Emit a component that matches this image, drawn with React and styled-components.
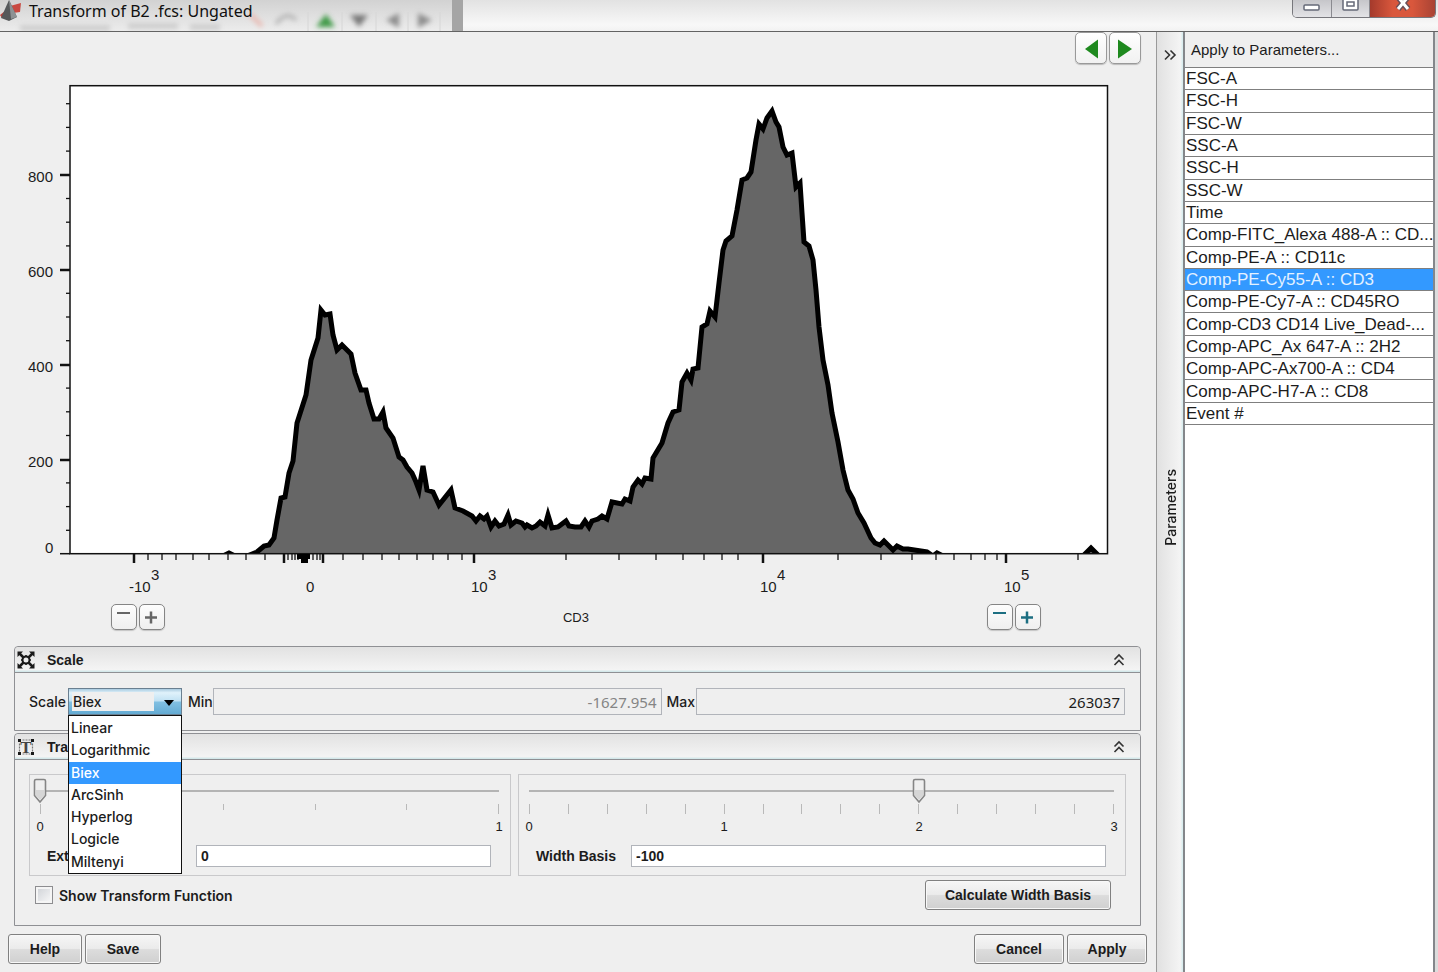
import React, { useState } from 'react'
import styled, { createGlobalStyle } from 'styled-components'

const colors = {
  window: '#efefef',
  border: '#8f9094',
  line: '#c9c9cb',
  field: '#b1b4ba',
  selected: '#3399ff',
  text: '#1c1c1c',
  green: '#1f8a1f',
  teal: '#1d6f82',
  grey: '#666666',
}

const sans = '"Liberation Sans", Arial, sans-serif'
const ui = 'Inter, "Liberation Sans", sans-serif'
const digits = '"Noto Sans", "Open Sans", sans-serif'

const GlobalStyle = createGlobalStyle`
  * {
    box-sizing: border-box;
  }
  body {
    margin: 0;
    background: ${colors.window};
    color: ${colors.text};
    font-family: ${sans};
  }
  button, input, select {
    margin: 0;
    color: inherit;
    font-family: inherit;
  }
`

const Window = styled.div`
  display: flex;
  flex-direction: column;
  min-height: 100vh;
`

const TitleBar = styled.header`
  position: relative;
  display: flex;
  align-items: flex-start;
  height: 32px;
  overflow: hidden;
  background: linear-gradient(#e2e2e2, #f8f8f8 80%, #f2f2f2);
  border-bottom: 1px solid #636363;
`

const GlassBackdrop = styled.svg`
  position: absolute;
  top: 0;
  left: 0;
`

const TitleIcon = styled.svg`
  position: relative;
  flex: none;
`

const Title = styled.h1`
  position: relative;
  flex: 1;
  margin: 0;
  padding-left: 7px;
  font-family: ${digits};
  font-size: 16px;
  font-weight: 400;
  line-height: 22px;
  color: #101010;
`

const WindowButtons = styled.div`
  display: flex;
  height: 18px;
  margin-right: 2px;
  overflow: hidden;
  border: 1px solid #77777c;
  border-top: 0;
  border-radius: 0 0 5px 5px;
`

const WindowButton = styled.button`
  display: flex;
  justify-content: center;
  width: ${(props) => (props.$close ? '66px' : '38px')};
  padding: 0;
  border: 0;
  border-left: ${(props) => (props.$first ? '0' : '1px solid #8a8a90')};
  background: ${(props) =>
    props.$close
      ? 'linear-gradient(90deg, #a43a2c, #d9573c 35%, #d9573c 65%, #a84334)'
      : 'linear-gradient(#c6c6ca, #e3e3e6)'};
`

const Body = styled.div`
  display: flex;
  flex: 1;
  border-right: 3px solid #dcdcdc;
`

const Main = styled.main`
  flex: 1;
  min-width: 0;
`

const NavRow = styled.nav`
  display: flex;
  justify-content: flex-end;
  gap: 2px;
  height: 34px;
  padding-right: 15px;
`

const NavButton = styled.button`
  width: 32px;
  height: 32px;
  padding: 0;
  border: 1px solid #999;
  border-radius: 5px;
  background: linear-gradient(#fff, #f1f1f1);
  box-shadow: 0 1px 1px #bbb;
`

const ChartSvg = styled.svg`
  display: block;
  width: 100%;
  font-family: ${sans};
  font-size: 15px;
  fill: ${colors.text};
`

const AxisControls = styled.div`
  display: flex;
  align-items: center;
  justify-content: space-between;
  padding: 2px 115px 16px 111px;
  font-size: 13px;
`

const ZoomGroup = styled.div`
  display: flex;
  gap: 2px;
`

const ZoomButton = styled.button`
  width: 26px;
  height: 26px;
  padding: 0;
  border: 1px solid #858585;
  border-radius: 5px;
  background: linear-gradient(#fdfdfd, #efefef);
  box-shadow: 0 1px 1px #c4c4c4;
  color: ${(props) => props.$tint};
  svg {
    display: block;
  }
`

const Panel = styled.section`
  margin: 0 15px 2px 14px;
  border: 1px solid ${colors.border};
  border-radius: 4px 4px 0 0;
`

const PanelHeader = styled.header`
  display: flex;
  align-items: center;
  height: 26px;
  padding: 0 15px 0 2px;
  border-bottom: 1px solid ${colors.border};
  border-radius: 4px 4px 0 0;
  background: linear-gradient(#e2e2e2, #f4f4f4 92%, #d4e8ea 96%);
`

const PanelTitle = styled.h2`
  flex: 1;
  margin: 0;
  padding-left: 12px;
  font-size: 14px;
  font-weight: 700;
`

const IconButton = styled.button`
  display: flex;
  padding: 0;
  border: 0;
  background: none;
`

const ScaleRow = styled.div`
  display: flex;
  align-items: center;
  padding: 15px 15px 15px 14px;
  font-family: ${ui};
  font-size: 14px;
  font-weight: 500;
`

const ScaleLabel = styled.label`
  flex: none;
  width: ${(props) => props.$width};
`

const ComboBox = styled.div`
  position: relative;
  flex: none;
  width: 114px;
  margin-right: 6px;
`

const Select = styled.select`
  display: block;
  width: 100%;
  height: 27px;
  padding: 0 4px;
  appearance: none;
  border: 1px solid #6a7f90;
  border-radius: 0;
  outline: 0;
  background: linear-gradient(${colors.window}, ${colors.window}) 3px 3px / 82px 19px no-repeat,
    linear-gradient(#a9cbe0, #e0f2fb 15%, #c0e1f3 48%, #82c0e2 52%, #64abd3);
  font-size: 14px;
  font-weight: 500;
`

const ComboArrow = styled.svg`
  position: absolute;
  top: 12px;
  right: 8px;
  pointer-events: none;
`

const Menu = styled.ul`
  position: absolute;
  z-index: 2;
  top: 27px;
  left: 0;
  display: grid;
  grid-auto-rows: 1fr;
  width: 100%;
  height: 159px;
  margin: 0;
  padding: 1px 0 0;
  list-style: none;
  border: 1px solid #111;
  background: #fff;
`

const MenuItem = styled.li`
  padding-left: 2px;
  line-height: 22px;
  color: ${(props) => (props.$selected ? '#fff' : colors.text)};
  background: ${(props) => (props.$selected ? colors.selected : 'transparent')};
`

const RangeInput = styled.input`
  flex: ${(props) => props.$grow};
  min-width: 0;
  height: 27px;
  padding: 0 4px;
  border: 1px solid ${colors.field};
  background: ${colors.window};
  color: ${(props) => (props.disabled ? '#858585' : colors.text)};
  font-family: ${digits};
  font-size: 15px;
  text-align: right;
`

const MaxLabel = styled(ScaleLabel)`
  padding-left: 5px;
`

const TransformBody = styled.div`
  padding: 14px 14px 15px;
`

const SliderGroups = styled.div`
  display: grid;
  grid-template-columns: 482fr 608fr;
  gap: 7px;
`

const SliderGroup = styled.div`
  padding: 3px 4px 8px 3px;
  border: 1px solid ${colors.line};
`

const thumb =
  "url(\"data:image/svg+xml,%3Csvg xmlns='http://www.w3.org/2000/svg' width='14' height='26'%3E%3Cpath d='M3 1.5h8q1.500 0 1.500 1.500v14.500l-5.500 6.500-5.500-6.500v-14.500q0-1.500 1.500-1.500z' fill='%23efefef' stroke='%23858585' stroke-width='1.600'/%3E%3Cpath d='M3 12h8v5.500l-4 4.500-4-4.500z' fill='%23d6d6d6'/%3E%3C/svg%3E\")"

const Slider = styled.input`
  display: block;
  width: 100%;
  height: 26px;
  appearance: none;
  background: linear-gradient(#b4b4b4, #b4b4b4) 7px 12px / calc(100% - 14px) 2px no-repeat;
  &::-webkit-slider-thumb {
    width: 14px;
    height: 26px;
    appearance: none;
    background: ${thumb} no-repeat;
  }
`

const Ticks = styled.div`
  display: flex;
  justify-content: space-between;
  height: 13px;
  padding: 0 7px;
`

const Tick = styled.span`
  width: 1px;
  height: ${(props) => (props.$short ? '6px' : '10px')};
  background: #b9b9b9;
`

const TickLabels = styled.div`
  display: flex;
  justify-content: space-between;
  font-size: 13px;
  line-height: 20px;
  span {
    width: 14px;
    text-align: center;
  }
`

const FieldRow = styled.div`
  display: flex;
  align-items: center;
  padding: 8px 15px 0 14px;
  font-size: 14px;
  font-weight: 700;
`

const FieldLabel = styled.label`
  flex: none;
  width: ${(props) => props.$width};
  white-space: nowrap;
`

const Field = styled.input`
  flex: 1;
  min-width: 0;
  height: 22px;
  padding: 0 4px;
  border: 1px solid ${colors.field};
  background: #fff;
  font-size: 14px;
  font-weight: 700;
`

const OptionsRow = styled.div`
  display: flex;
  align-items: center;
  justify-content: space-between;
  padding: 4px 15px 0 6px;
`

const CheckLabel = styled.label`
  display: flex;
  align-items: center;
  gap: 6px;
  font-family: ${ui};
  font-size: 14px;
  font-weight: 600;
`

const Checkbox = styled.input`
  width: 18px;
  height: 18px;
  appearance: none;
  border: 1px solid #8d8d90;
  background: linear-gradient(135deg, #cdd0d5, #fafafa);
  box-shadow: inset 0 0 0 2px #f5f5f5;
`

const Button = styled.button`
  min-width: ${(props) => props.$width};
  height: 30px;
  padding: 0 10px;
  border: 1px solid #808080;
  border-radius: 3px;
  background: linear-gradient(#f6f6f6, #ebebeb 48%, #dcdcdc 52%, #d0d0d0);
  box-shadow: inset 0 0 0 1px #f8f8f8;
  font-size: 14px;
  font-weight: 700;
`

const Footer = styled.footer`
  display: flex;
  gap: 3px;
  padding: 6px 9px 7px 8px;
`

const Spacer = styled.div`
  flex: 1;
`

const Rail = styled.div`
  display: grid;
  grid-template-rows: 1fr auto 1fr;
  flex: none;
  justify-items: center;
  width: 27px;
  padding-top: 10px;
  border-left: 1px solid #9a9a9a;
  background: linear-gradient(90deg, #e1e1e1, #f4f4f4 90%, #d4ecee);
`

const RailButton = styled(IconButton)`
  align-self: start;
  padding-top: 7px;
`

const RailLabel = styled.span`
  writing-mode: vertical-rl;
  transform: rotate(180deg);
  font-family: ${ui};
  font-size: 14px;
  font-weight: 500;
`

const Side = styled.aside`
  display: flex;
  flex: none;
  flex-direction: column;
  width: 252px;
  border-right: 2px solid #84878b;
  border-left: 2px solid #84878b;
  background: #fff;
`

const SideTitle = styled.h2`
  margin: 0;
  padding-left: 6px;
  border-bottom: 1px solid #7f7f7f;
  background: ${colors.window};
  font-size: 15px;
  font-weight: 400;
  line-height: 35px;
`

const ParameterTable = styled.table`
  width: 100%;
  height: 357px;
  table-layout: fixed;
  border-spacing: 0;
  font-size: 17px;
`

const ParameterCell = styled.td`
  padding: 1px 0 0 1px;
  overflow: hidden;
  border-bottom: 1px solid #7f7f7f;
  line-height: 20px;
  white-space: nowrap;
  color: ${(props) => (props.$selected ? '#e4f1ff' : colors.text)};
  background: ${(props) => (props.$selected ? colors.selected : '#fff')};
`

const scales = ['Linear', 'Logarithmic', 'Biex', 'ArcSinh', 'Hyperlog', 'Logicle', 'Miltenyi']

const parameters = [
  'FSC-A',
  'FSC-H',
  'FSC-W',
  'SSC-A',
  'SSC-H',
  'SSC-W',
  'Time',
  'Comp-FITC_Alexa 488-A :: CD...',
  'Comp-PE-A :: CD11c',
  'Comp-PE-Cy55-A :: CD3',
  'Comp-PE-Cy7-A :: CD45RO',
  'Comp-CD3 CD14 Live_Dead-...',
  'Comp-APC_Ax 647-A :: 2H2',
  'Comp-APC-Ax700-A :: CD4',
  'Comp-APC-H7-A :: CD8',
  'Event #',
]

const histogram = `70,556 223,556 229,553 235,556 247,556 252,554 257,552 264,546 269,545 274,538
  277,520 281,498 285,497 289,473 293,461 297,423 306,395 311,360 318,338 321,310 325,315 330,314
  333,335 337,350 342,345 351,354 355,373 361,390 366,390 369,403 374,419 379,419 383,412 386,428
  393,438 399,457 403,460 407,467 412,473 416,482 419,490 423,466 427,490 433,492 439,505 451,490
  455,508 463,511 472,516 476,521 480,516 484,519 487,516 491,527 495,521 499,526 504,524 508,515
  511,525 516,521 522,523 525,527 527,525 532,528 536,526 540,522 545,526 548,515 552,528 558,527
  566,521 569,526 575,527 581,527 585,521 589,527 592,521 598,519 602,516 607,519 612,502 622,504
  625,499 630,501 633,487 638,480 642,484 645,478 651,479 653,458 662,443 668,423 673,412 679,410
  682,382 687,373 691,380 693,369 698,368 702,327 707,324 710,311 715,317 719,283 723,250 726,241
  732,236 737,210 742,180 747,178 751,172 756,140 759,124 763,129 767,118 772,111 776,122 779,127
  783,147 787,155 792,153 794,170 796,187 800,183 802,213 804,242 809,246 813,260 816,290 819,327
  823,360 828,385 832,413 838,442 843,470 848,490 853,499 858,513 864,523 871,538 875,543 880,545
  884,541 893,550 897,546 903,549 908,549 927,552 933,556 937,553 943,556 1083,556 1091,548 1099,556
  1107,556`

const minorX = [
  148, 162, 176, 193, 209, 228, 246, 265, 288, 292, 295, 298, 313, 317, 320, 343, 363, 382, 399, 417,
  433, 448, 462, 566, 619, 656, 683, 704, 722, 738, 838, 881, 912, 936, 954, 971, 985, 997, 1078,
]
const majorX = [134, 284, 323, 474, 763, 1006]

const yLabels = [
  { text: '800', x: 28, y: 175 },
  { text: '600', x: 28, y: 270 },
  { text: '400', x: 28, y: 365 },
  { text: '200', x: 28, y: 460 },
]

const xLabels = [
  { base: '-10', power: '3', x: 129, px: 151 },
  { base: '0', x: 306 },
  { base: '10', power: '3', x: 471, px: 488 },
  { base: '10', power: '4', x: 760, px: 777 },
  { base: '10', power: '5', x: 1004, px: 1021 },
]

const minorY = []
for (let i = 0; i < 20; i += 1) {
  if (i % 4 !== 0) minorY.push(554 - i * 23.7)
}

const Histogram = () => (
  <ChartSvg viewBox="0 66 1156 536" role="img" aria-label="CD3 histogram">
    <clipPath id="plot">
      <rect x="70" y="86" width="1037" height="468" />
    </clipPath>
    <rect x="70" y="86" width="1037" height="468" fill="#fff" />
    <polygon points={`${histogram} 1107,560 70,560`} fill="#666" clipPath="url(#plot)" />
    <polyline
      points={histogram}
      fill="none"
      stroke="#000"
      strokeWidth="5"
      strokeMiterlimit="5"
      clipPath="url(#plot)"
    />
    <rect x="70" y="85.700" width="1037.500" height="468" fill="none" stroke="#111" strokeWidth="1.500" />
    <g stroke="#111" strokeWidth="1.300">
      {minorY.map((y) => (
        <line key={y} x1="66" x2="70" y1={y} y2={y} />
      ))}
      {minorX.map((x) => (
        <line key={x} x1={x} x2={x} y1="554" y2="560" />
      ))}
    </g>
    <g stroke="#111" strokeWidth="2.500">
      {yLabels.map(({ y }) => (
        <line key={y} x1="60" x2="70" y1={y} y2={y} />
      ))}
      {majorX.map((x) => (
        <line key={x} x1={x} x2={x} y1="554" y2="563" />
      ))}
    </g>
    <line x1="60" x2="70" y1="553.700" y2="553.700" stroke="#111" strokeWidth="1.500" />
    <rect x="297" y="554" width="13" height="5" fill="#000" />
    <rect x="301" y="554" width="7" height="9" fill="#000" />
    {yLabels.map(({ text, x, y }) => (
      <text key={text} x={x} y={y + 7}>
        {text}
      </text>
    ))}
    <text x="45" y="553">0</text>
    {xLabels.map(({ base, power, x, px }) => (
      <g key={x}>
        <text x={x} y="592">
          {base}
        </text>
        {power && (
          <text x={px} y="580">
            {power}
          </text>
        )}
      </g>
    ))}
  </ChartSvg>
)

const ZoomButtons = ({ tint, side }) => (
  <ZoomGroup>
    <ZoomButton $tint={tint} aria-label={`Shrink ${side}`}>
      <svg width="24" height="24" stroke="currentColor" strokeWidth="2">
        <path d="M5 8h13" />
      </svg>
    </ZoomButton>
    <ZoomButton $tint={tint} aria-label={`Expand ${side}`}>
      <svg width="24" height="24" stroke="currentColor" strokeWidth="2.500">
        <path d="M5 12.500h12M11 6.500v12" />
      </svg>
    </ZoomButton>
  </ZoomGroup>
)

const CollapseIcon = () => (
  <svg width="12" height="14" fill="none" stroke="#333" strokeWidth="1.600">
    <path d="M1.500 6.500 6 2l4.500 4.500M1.500 12 6 7.500l4.500 4.500" />
  </svg>
)

const ScaleIcon = () => (
  <svg width="18" height="18" viewBox="0 0 18 18" fill="none" stroke="#1a1a1a" strokeWidth="2">
    <circle cx="9" cy="9" r="3.500" />
    <path d="M6.500 6.500 2 2M11.500 6.500 16 2M6.500 11.500 2 16M11.500 11.500 16 16" strokeWidth="2.500" />
    <path d="M0.500 0.500h5.500l-5.500 5.500zM17.500 0.500v5.500L12 0.500zM17.500 17.500H12l5.500-5.500zM0.500 17.500V12L6 17.500z" fill="#1a1a1a" stroke="none" />
    <path d="M9 4v2M9 12v2M4 9h2M12 9h2" strokeWidth="1.500" />
  </svg>
)

const TransformIcon = () => (
  <svg width="18" height="18" viewBox="0 0 18 18">
    <path d="M1 1h3v3H1zM14 1h3v3h-3zM1 14h3v3H1zM14 14h3v3h-3z" fill="#1a1a1a" />
    <path d="M5.500 2h8M5.500 16h8M2.500 5.500v8M15.500 5.500v8" stroke="#777" strokeWidth="1.200" strokeDasharray="2 1" />
    <text x="9" y="15" textAnchor="middle" fontFamily="Liberation Serif" fontSize="17" fontWeight="700" fill="#444">
      T
    </text>
  </svg>
)

const Caption = () => (
  <TitleBar>
    <GlassBackdrop width="480" height="31">
      <defs>
        <linearGradient id="glass" x1="0" x2="0" y1="0" y2="1">
          <stop offset="0" stopColor="#d2d2d2" />
          <stop offset="1" stopColor="#ececec" />
        </linearGradient>
        <filter id="soft" x="-20%" y="-50%" width="140%" height="200%">
          <feGaussianBlur stdDeviation="2.500" />
        </filter>
      </defs>
      <rect width="456" height="31" fill="url(#glass)" />
      <g filter="url(#soft)">
        <path d="M20 28h90M128 26h50M190 27h30" stroke="#c9c9c9" strokeWidth="5" />
        <path d="M250 14l12 12" stroke="#e9b8b0" strokeWidth="4" />
        <path d="M276 24q10-14 20-4" fill="none" stroke="#aaa" strokeWidth="3" />
        <path d="M316 27l10-13 9 13z" fill="#3f9a46" />
        <path d="M350 15h18l-9 12z" fill="#777" />
        <path d="M399 13v15l-13-8zM418 13v15l14-8z" fill="#8c8c8c" />
      </g>
      <path d="M308 12v19M342 12v19M376 12v19M408 12v19M440 12v19" stroke="#d6d6d6" />
      <rect x="452" width="11" height="31" fill="#a5a5a5" />
    </GlassBackdrop>
    <TitleIcon width="22" height="22">
      <path d="M10 6l11-3-1 9-7 1z" fill="#c94a42" />
      <path d="M0 15l5-4 2 5-5 2z" fill="#b8433c" />
      <path d="M9 0l8 17-8 4-8-3z" fill="#55585a" />
      <path d="M9 0l8 17-6 2z" fill="#8e9294" />
    </TitleIcon>
    <Title>Transform of B2 .fcs: Ungated</Title>
    <WindowButtons>
      <WindowButton $first aria-label="Minimize">
        <svg width="20" height="17">
          <rect x="2" y="5" width="15" height="5" rx="1" fill="#fff" stroke="#666a78" strokeWidth="1.500" />
        </svg>
      </WindowButton>
      <WindowButton aria-label="Maximize">
        <svg width="20" height="17" fill="#fff" stroke="#666a78" strokeWidth="1.500">
          <rect x="2" y="-3" width="15" height="13" rx="1" />
          <rect x="6" y="2" width="7" height="4" />
        </svg>
      </WindowButton>
      <WindowButton $close aria-label="Close">
        <svg width="20" height="17">
          <path d="M5-3l10 12M15-3L5 9" stroke="#6a5058" strokeWidth="6" />
          <path d="M5-3l10 12M15-3L5 9" stroke="#fff" strokeWidth="3" />
        </svg>
      </WindowButton>
    </WindowButtons>
  </TitleBar>
)

const App = () => {
  const [scale, setScale] = useState('Biex')

  return (
    <Window>
      <GlobalStyle />
      <Caption />
      <Body>
        <Main>
          <NavRow>
            <NavButton aria-label="Previous parameter">
              <svg width="30" height="30" fill={colors.green}>
                <path d="M22 6.500v19L9 16z" />
              </svg>
            </NavButton>
            <NavButton aria-label="Next parameter">
              <svg width="30" height="30" fill={colors.green}>
                <path d="M8 6.500v19L22 16z" />
              </svg>
            </NavButton>
          </NavRow>
          <Histogram />
          <AxisControls>
            <ZoomButtons tint={colors.grey} side="negative" />
            <span>CD3</span>
            <ZoomButtons tint={colors.teal} side="positive" />
          </AxisControls>

          <Panel>
            <PanelHeader>
              <ScaleIcon />
              <PanelTitle>Scale</PanelTitle>
              <IconButton aria-label="Collapse scale">
                <CollapseIcon />
              </IconButton>
            </PanelHeader>
            <ScaleRow>
              <ScaleLabel htmlFor="scale" $width="39px">
                Scale
              </ScaleLabel>
              <ComboBox>
                <Select id="scale" value={scale} onChange={(e) => setScale(e.target.value)}>
                  {scales.map((name) => (
                    <option key={name}>{name}</option>
                  ))}
                </Select>
                <ComboArrow width="10" height="6">
                  <path d="M0 0h10L5 6z" />
                </ComboArrow>
                <Menu role="listbox" aria-label="Scale">
                  {scales.map((name) => (
                    <MenuItem
                      key={name}
                      role="option"
                      aria-selected={name === scale}
                      $selected={name === scale}
                      onClick={() => setScale(name)}
                    >
                      {name}
                    </MenuItem>
                  ))}
                </Menu>
              </ComboBox>
              <ScaleLabel htmlFor="min" $width="25px">
                Min
              </ScaleLabel>
              <RangeInput id="min" $grow={23} defaultValue="-1627.954" disabled />
              <MaxLabel htmlFor="max" $width="34px">
                Max
              </MaxLabel>
              <RangeInput id="max" $grow={22} defaultValue="263037" />
            </ScaleRow>
          </Panel>

          <Panel>
            <PanelHeader>
              <TransformIcon />
              <PanelTitle>Transform</PanelTitle>
              <IconButton aria-label="Collapse transform">
                <CollapseIcon />
              </IconButton>
            </PanelHeader>
            <TransformBody>
              <SliderGroups>
                <SliderGroup>
                  <Slider type="range" min="0" max="1" step="0.1" defaultValue="0" aria-label="Extra decades" />
                  <Ticks>
                    {[0, 1, 2, 3, 4, 5].map((n) => (
                      <Tick key={n} $short={n > 0 && n < 5} />
                    ))}
                  </Ticks>
                  <TickLabels>
                    <span>0</span>
                    <span>1</span>
                  </TickLabels>
                  <FieldRow>
                    <FieldLabel htmlFor="decades" $width="149px">
                      Extra Decades
                    </FieldLabel>
                    <Field id="decades" defaultValue="0" />
                  </FieldRow>
                </SliderGroup>
                <SliderGroup>
                  <Slider type="range" min="0" max="3" step="0.2" defaultValue="2" aria-label="Width basis" />
                  <Ticks>
                    {Array.from({ length: 16 }, (_, n) => (
                      <Tick key={n} />
                    ))}
                  </Ticks>
                  <TickLabels>
                    <span>0</span>
                    <span>1</span>
                    <span>2</span>
                    <span>3</span>
                  </TickLabels>
                  <FieldRow>
                    <FieldLabel htmlFor="basis" $width="95px">
                      Width Basis
                    </FieldLabel>
                    <Field id="basis" defaultValue="-100" />
                  </FieldRow>
                </SliderGroup>
              </SliderGroups>
              <OptionsRow>
                <CheckLabel>
                  <Checkbox type="checkbox" />
                  Show Transform Function
                </CheckLabel>
                <Button $width="186px">Calculate Width Basis</Button>
              </OptionsRow>
            </TransformBody>
          </Panel>

          <Footer>
            <Button $width="74px">Help</Button>
            <Button $width="76px">Save</Button>
            <Spacer />
            <Button $width="90px">Cancel</Button>
            <Button $width="80px">Apply</Button>
          </Footer>
        </Main>

        <Rail>
          <RailButton aria-label="Hide parameters">
            <svg width="14" height="12" fill="none" stroke="#333" strokeWidth="1.600">
              <path d="M2 1.500 6.500 6 2 10.500M7.500 1.500 12 6l-4.500 4.500" />
            </svg>
          </RailButton>
          <RailLabel>Parameters</RailLabel>
        </Rail>

        <Side>
          <SideTitle>Apply to Parameters...</SideTitle>
          <ParameterTable>
            <tbody>
              {parameters.map((name) => (
                <tr key={name}>
                  <ParameterCell $selected={name.endsWith('Cy55-A :: CD3')}>{name}</ParameterCell>
                </tr>
              ))}
            </tbody>
          </ParameterTable>
        </Side>
      </Body>
    </Window>
  )
}

export default App
